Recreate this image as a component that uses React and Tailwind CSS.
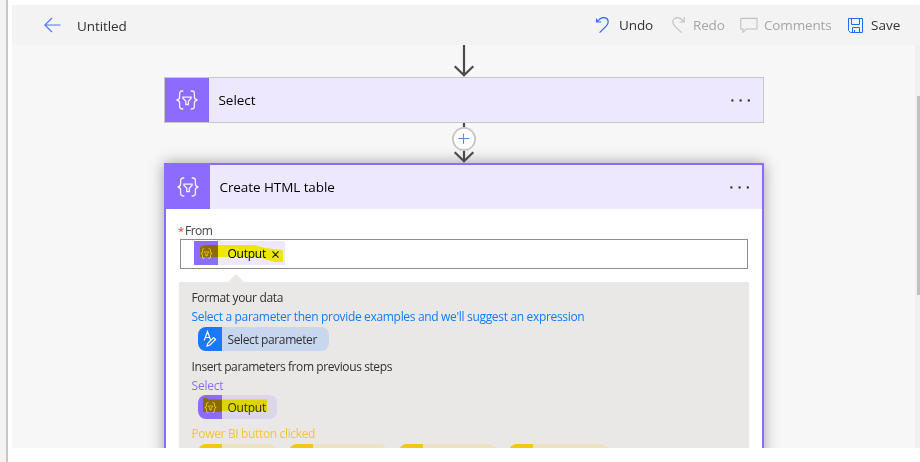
import React from 'react';

function BracesFilter({ className, color = '#f3eeff' }) {
  return (
    <svg className={className} viewBox="0 0 24 20" fill="none" stroke={color} strokeWidth="1.3">
      <path d="M8.3 1H7Q4.6 1 4.6 3.4V7Q4.6 9.6 1.5 10Q4.6 10.4 4.6 13V16.6Q4.6 19 7 19H8.3" />
      <path d="M15.7 1H17Q19.4 1 19.4 3.4V7Q19.4 9.6 22.5 10Q19.4 10.4 19.4 13V16.6Q19.4 19 17 19H15.7" />
      <path d="M7.8 7.2H16.2V8L13.4 11.2V14.5H10.8V11.2L7.8 8Z" />
    </svg>
  );
}

function Dots({ className }) {
  return (
    <svg className={className} width="20" height="3" viewBox="0 0 20 3" fill="#252423">
      <rect x="0.4" y="0.4" width="2" height="2.1" />
      <rect x="8.6" y="0.4" width="2" height="2.1" />
      <rect x="16.8" y="0.4" width="2" height="2.1" />
    </svg>
  );
}

function StepHeader({ title, titleClass }) {
  return (
    <div className="flex h-11 items-center bg-[#eee8ff]">
      <div className="flex h-11 w-11 shrink-0 items-center justify-center bg-[#8c6cff]">
        <BracesFilter className="h-5 w-6" />
      </div>
      <span className={`text-[13.5px] text-black ${titleClass}`}>{title}</span>
      <Dots className="mr-[12px] ml-auto" />
    </div>
  );
}

function YellowTokens() {
  const widths = ['w-[79px]', 'w-[98px]', 'w-[98px]', 'w-[100px]'];
  return (
    <div className="mt-px ml-[6.5px] flex gap-3">
      {widths.map((w, i) => (
        <div key={i} className={`h-6 shrink-0 overflow-hidden rounded-lg bg-[#ece3c5] ${w}`}>
          <div className="h-6 w-6 bg-[#f2c811]" />
        </div>
      ))}
    </div>
  );
}

export default function App() {
  return (
    <div className="flex h-[462px] w-[920px] overflow-hidden bg-white font-['Open_Sans','Noto_Sans',sans-serif] whitespace-nowrap">
      <div className="w-2 shrink-0 border-r-2 border-[#c8c8c8] bg-[#f3f2f1]" />
      <div className="ml-1 mt-[5px] flex h-[443px] w-[908px] flex-col overflow-hidden">
        <header className="flex h-10 shrink-0 items-center bg-[#f3f3f3] text-[13.5px] text-[#323130]">
          <svg className="ml-8 h-4 w-[17px]" viewBox="0 0 17 16" fill="none" stroke="#4878ff" strokeWidth="1.2">
            <path d="M.8 8H16.5M8 1L.8 8L8 15" />
          </svg>
          <span className="ml-4 w-[519px] pt-[3px] tracking-[-0.1px]">Untitled</span>
          <svg className="h-[18px] w-[14px] shrink-0" viewBox="0 0 14 18" fill="none" stroke="#2468ff" strokeWidth="1.15">
            <path d="M.7 2.6V6H5.2M.9 5.7C3.5 3 5 1.6 7.4 1.6C10.4 1.6 12.2 3.6 12.2 6C12.2 7.8 11.5 8.8 10.2 10.1L3.6 16.6" />
          </svg>
          <span className="ml-[9px] w-[53px] pt-px tracking-[-0.1px]">Undo</span>
          <svg className="h-[18px] w-[14px] shrink-0" viewBox="0 0 14 18" fill="none" stroke="#c2c2c2" strokeWidth="1.15">
            <path d="M12.2 1V6H7.7M12 5.7C9.5 3 8 1.6 5.6 1.6C2.6 1.6.8 3.6.8 6C.8 7.8 1.5 8.8 2.8 10.1L9.4 16.6" />
          </svg>
          <span className="ml-[7px] w-[47px] pt-px tracking-[-0.15px] text-[#a6a6a6]">Redo</span>
          <svg className="h-[16px] w-[18px] shrink-0" viewBox="0 0 18 16" fill="none" stroke="#c2c2c2" strokeWidth="1.1">
            <path d="M.8 1.4H17V12H6.2L2.9 15.2V12H.8Z" />
          </svg>
          <span className="ml-[6px] w-[84px] pt-px tracking-[-0.15px] text-[#a6a6a6]">Comments</span>
          <svg className="h-[15px] w-[15px] shrink-0" viewBox="0 0 15 15" fill="none" stroke="#2468ff" strokeWidth="1">
            <path d="M.5.5H14.5V14.5H2.5L.5 12.5ZM3.5.5V6.5H11.5V.5M4.5 14.5V9.5H11.5V14.5M6.5 12V14.5" />
          </svg>
          <span className="ml-2 pt-px">Save</span>
        </header>

        <div className="flex h-[403px] bg-[#f7f7f7]">
          <main className="ml-[152px] w-[600px] shrink-0">
            <div className="flex h-8 justify-center">
              <svg className="h-8 w-6" viewBox="0 0 24 32" fill="none" stroke="#4b4b4b" strokeWidth="2.2">
                <path d="M12 0V30M2.7 21.3L12 30.2L21.3 21.3" />
              </svg>
            </div>
            <section className="h-[46px] border border-[#c8c6c8]">
              <StepHeader title="Select" titleClass="ml-[9.5px] tracking-[-0.05px]" />
            </section>
            <div className="flex h-10 justify-center">
              <svg className="h-10 w-6" viewBox="0 0 24 40" fill="none">
                <path d="M12 0V38M2.7 29.3L12 38.2L21.3 29.3" stroke="#4b4b4b" strokeWidth="2.2" />
                <circle cx="12" cy="16" r="11.1" fill="white" stroke="#c8c8c8" strokeWidth="1.8" />
                <path d="M6.3 15.5H17.2M11.5 10.5V21" stroke="#5b8edc" strokeWidth="1.1" />
              </svg>
            </div>
            <section className="h-[310px] border-2 border-[#8c6cff] bg-white shadow-[0_0_14px_rgba(0,0,0,0.36)]">
              <StepHeader title="Create HTML table" titleClass="ml-[9.5px] tracking-[-0.08px]" />
              <div className="ml-[13px] w-[570px]">
                <div className="flex h-[30px] items-end text-xs leading-[16px] text-[#484644]">
                  <span className="-ml-px mr-[2px] w-[5px] text-[11px] text-[#e02b2b]">*</span>
                  <span className="tracking-[-0.5px]">From</span>
                </div>
                <div className="ml-px flex h-[30px] w-[568px] items-start border border-[#8c8c8c] bg-white pt-px pl-[13px]">
                  <div className="relative flex h-6 w-[91px] items-center bg-[#eee8ff] text-xs text-black">
                    <div className="flex h-6 w-6 items-center justify-center bg-[#8c6cff]">
                      <BracesFilter className="h-[11px] w-[13px]" />
                    </div>
                    <span className="ml-[9.5px] w-[44.5px] pt-px tracking-[-0.25px]">Output</span>
                    <svg className="mt-[2px] h-[7px] w-[7px]" viewBox="0 0 7 7" stroke="#201f1e" strokeWidth="1.1">
                      <path d="M.4.4L6.6 6.6M6.6.4L.4 6.6" />
                    </svg>
                    <svg className="absolute top-0 left-0 h-6 w-[91px] mix-blend-multiply" viewBox="0 0 91 24" fill="#ffff00">
                      <path d="M6 6L11 4H61Q71 8 89 9V21H81Q69 18 65 16H6Z" />
                    </svg>
                  </div>
                </div>
                <svg className="ml-[49px] mt-[5px] block h-2 w-4" viewBox="0 0 16 8" fill="#e9e8e6">
                  <path d="M0 8L8 0L16 8Z" />
                </svg>
                <div className="h-[167px] bg-[#e9e8e6] pt-[6px] pl-[12.5px] text-xs leading-[19px] tracking-[-0.35px] text-[#323130]">
                  <div>Format your data</div>
                  <div className="tracking-[-0.325px] text-[#0f7cff]">Select a parameter then provide examples and we'll suggest an expression</div>
                  <div className="mt-px ml-[6.5px] flex h-6 w-[131px] items-center overflow-hidden rounded-lg bg-[#c8d7ed]">
                    <div className="flex h-6 w-6 shrink-0 items-center justify-center bg-[#1a78ff]">
                      <svg className="h-[18px] w-[14px]" viewBox="0 0 14 18" fill="none" stroke="white" strokeWidth="1.15">
                        <path d="M1.2 10.5L4.5 1.5L7.8 10.5M2.3 7.5H6.7M4 16L5 13L10.6 7.5L12.6 9.5L7 15Z" />
                      </svg>
                    </div>
                    <span className="ml-[5.5px] tracking-[-0.38px]">Select parameter</span>
                  </div>
                  <div className="mt-[6px] tracking-[-0.4px]">Insert parameters from previous steps</div>
                  <div className="tracking-[-0.2px] text-[#8c6cff]">Select</div>
                  <div className="relative ml-[6.5px] flex h-6 w-[79px] items-center overflow-hidden rounded-lg bg-[#ddd5ec]">
                    <div className="flex h-6 w-6 shrink-0 items-center justify-center bg-[#8c6cff]">
                      <BracesFilter className="h-[11px] w-[13px]" />
                    </div>
                    <span className="ml-[5.5px] tracking-[-0.25px]">Output</span>
                    <svg className="absolute top-0 left-0 h-6 w-[79px] mix-blend-multiply" viewBox="0 0 79 24" fill="#ffff00">
                      <path d="M5 3H9L11 4.5H69V16H24L23 17H5Z" />
                    </svg>
                  </div>
                  <div className="mt-[5px] tracking-[-0.35px] text-[#f2c43c]">Power BI button clicked</div>
                  <YellowTokens />
                </div>
              </div>
            </section>
          </main>
          <div className="ml-auto w-[5px] bg-[#f0f0f0] pt-[51px] pl-[2px]">
            <div className="h-[199px] bg-[#c1c1c1]" />
          </div>
        </div>
      </div>
    </div>
  );
}
